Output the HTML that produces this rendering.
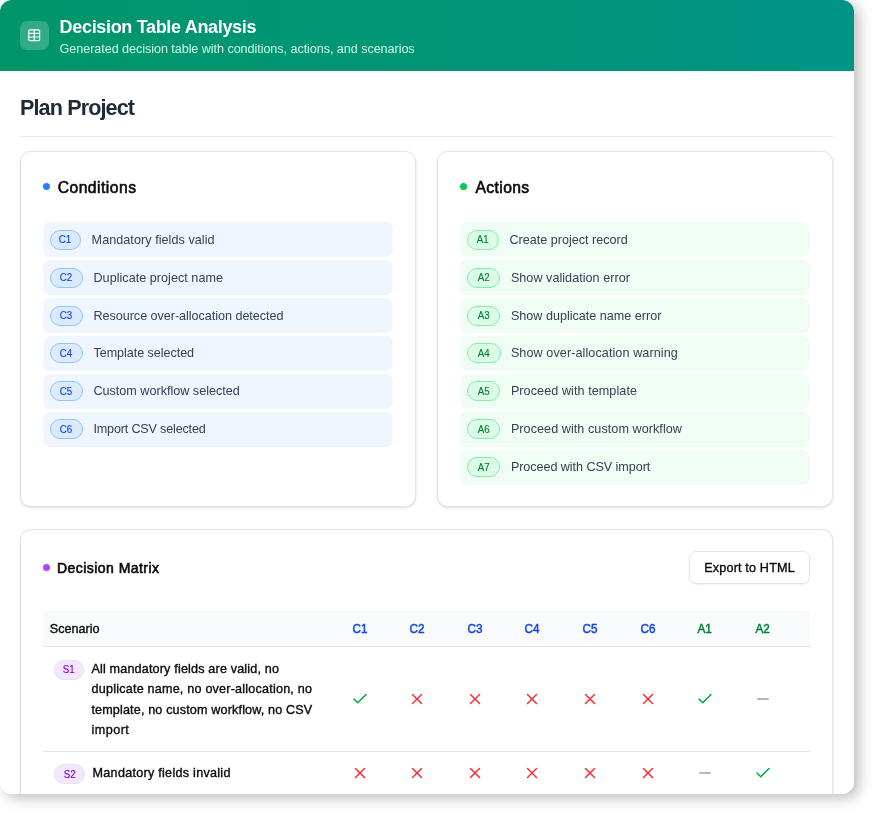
<!DOCTYPE html>
<html lang="en">
<head>
<meta charset="utf-8">
<title>Decision Table Analysis</title>
<style>
*{box-sizing:border-box;margin:0;padding:0}
html{font-size:14.4px}
body{width:877px;height:819px;overflow:hidden;background:#fff;font-family:"Liberation Sans",Arial,sans-serif;color:#0a0a0a}
.t{position:relative;top:.08em;white-space:nowrap}
.m{-webkit-text-stroke:.35px currentColor}
.sb{-webkit-text-stroke:.6px currentColor}
.dialog{will-change:transform;position:absolute;left:0;top:0;width:854px;height:794px;border-radius:12px;background:#fff;overflow:hidden;box-shadow:5px 4px 14px rgba(0,0,0,.26)}
.hdr{height:70.7px;background:linear-gradient(to right,#009669,#009485);background:linear-gradient(to right in oklab,#009669,#009485);display:flex;align-items:center;padding:0 0 0 20px;gap:.75rem;color:#fff}
.hdr .ico{width:2rem;height:2rem;border-radius:.5rem;background:rgba(255,255,255,.2);display:flex;align-items:center;justify-content:center;flex:none}
.hdr .ico svg{width:1rem;height:1rem}
.hdr h1{font-size:18px;line-height:1.75rem;font-weight:700}
.hdr p{font-size:12.6px;line-height:1.25rem;color:#d0fae5}
.body{padding:1.5rem 21px 0 20px}
h2{font-size:21.6px;line-height:2rem;font-weight:700;color:#1e2939;padding-bottom:15px;border-bottom:1px solid #e5e7eb}
.grid{display:grid;grid-template-columns:1fr 1fr;gap:1.5rem;margin-top:13.8px}
.card{background:#fff;border:1px solid #e5e5e5;border-radius:.75rem;padding:1.5rem 0;box-shadow:0 1px 3px 0 rgba(0,0,0,.1),0 1px 2px -1px rgba(0,0,0,.1)}
.card .ct{padding:0 1.5rem;display:flex;align-items:center;gap:.5rem;font-size:15.7px;line-height:1.75rem;font-weight:400;color:#0a0a0a}
.dot{width:7px;height:7px;border-radius:50%;flex:none;margin-right:.2px}
.list{padding:0 1.5rem;margin-top:23.66px;display:flex;flex-direction:column;gap:3.06px}
.item{display:flex;align-items:center;gap:.75rem;padding:.5rem;border-radius:.5rem;font-size:12.6px;line-height:20.475px;color:#364153}
.item.c{background:#eff6ff}
.item.a{background:#f0fdf4}
.badge{display:inline-flex;align-items:center;justify-content:center;border-radius:9999px;border:1px solid;padding:.125rem 0;font-size:10.8px;line-height:1rem;font-weight:400;white-space:nowrap;flex:none;position:relative;top:0}
.badge .t{top:-.15px;display:inline-block;transform:scaleX(.9);-webkit-text-stroke:.15px currentColor}
.badge.c{background:#dbeafe;border-color:#8ec5ff;color:#1447e6}
.badge.a{background:#dcfce7;border-color:#7bf1a8;color:#008236}
.badge.s{background:#f3e8ff;border-color:#e6e1ec;color:#8200db;margin-top:1.6px;margin-left:.8px;margin-right:-.8px}
.matrix{margin-top:1.5rem}
.mh{padding:0 1.5rem;display:flex;align-items:center;justify-content:space-between}
.mh .tt{display:flex;align-items:center;gap:.5rem;font-size:14px;line-height:1.5rem;font-weight:400}
.btn{height:2.25rem;width:120.5px;margin-right:.6px;justify-content:center;border:1px solid #e5e5e5;border-radius:.5rem;background:#fff;font-size:12.6px;font-weight:400;display:flex;align-items:center;box-shadow:0 1px 2px 0 rgba(0,0,0,.05);color:#0a0a0a}
.tw{margin:27.1px 1.5rem 0 1.5rem;overflow:hidden}
table{border-collapse:collapse;font-size:12.6px;table-layout:fixed;width:1400px}
th{height:2.5rem;padding:0;text-align:center;font-weight:400;background:#f9fafb;white-space:nowrap}
thead tr{border-bottom:1px solid #e5e5e5}
tbody tr{border-bottom:1px solid #e5e5e5}
th.s0{text-align:left;padding-left:.5rem}
th.c{color:#1447e6}
th.c .t,th.a .t{display:inline-block;transform:scaleX(.93);-webkit-text-stroke:.5px currentColor;top:.2px}
th.a{color:#008236}
td{padding:.75rem 0;vertical-align:middle}
td.sc{padding:.75rem}
.scw{display:flex;align-items:flex-start;gap:.5rem}
.scw .tx{font-size:12.6px;line-height:20.475px;font-weight:400;color:#0a0a0a;white-space:nowrap}
.scw .tx .t{display:inline-block;height:20.475px;vertical-align:top;top:.65px}
.item>.t{top:.29px}
th .t{top:.2px}
td svg{width:1.25rem;height:1.25rem;display:block;margin:0 auto}
</style>
</head>
<body>
<div class="dialog">
  <div class="hdr">
    <div class="ico"><svg viewBox="0 0 24 24" fill="none" stroke="#fff" stroke-width="2" stroke-linecap="round" stroke-linejoin="round"><path d="M12 3v18"/><rect width="18" height="18" x="3" y="3" rx="2"/><path d="M3 9h18"/><path d="M3 15h18"/></svg></div>
    <div>
      <h1><span class="t" id="h1" style="letter-spacing:-0.327px;left:0.00px">Decision Table Analysis</span></h1>
      <p><span class="t" id="sub" style="letter-spacing:-0.054px;left:0.00px">Generated decision table with conditions, actions, and scenarios</span></p>
    </div>
  </div>
  <div class="body">
    <h2><span class="t" id="h2" style="letter-spacing:-0.891px;left:0.00px">Plan Project</span></h2>
    <div class="grid">
      <div class="card">
        <div class="ct"><span class="dot" style="background:#2b7fff"></span><span class="t sb" id="ct1" style="letter-spacing:0.467px;left:0.70px">Conditions</span></div>
        <div class="list">
          <div class="item c"><span class="badge c" style="width:31.0px"><span class="t" id="bc1" style="letter-spacing:0.000px">C1</span></span><span class="t" id="ic1" style="letter-spacing:0.057px;left:0.00px">Mandatory fields valid</span></div><div class="item c"><span class="badge c" style="width:32.9px"><span class="t" id="bc2" style="letter-spacing:0.000px">C2</span></span><span class="t" id="ic2" style="letter-spacing:0.033px;left:0.00px">Duplicate project name</span></div><div class="item c"><span class="badge c" style="width:32.9px"><span class="t" id="bc3" style="letter-spacing:0.000px">C3</span></span><span class="t" id="ic3" style="letter-spacing:-0.034px;left:0.00px">Resource over-allocation detected</span></div><div class="item c"><span class="badge c" style="width:32.9px"><span class="t" id="bc4" style="letter-spacing:0.000px">C4</span></span><span class="t" id="ic4" style="letter-spacing:-0.056px;left:0.00px">Template selected</span></div><div class="item c"><span class="badge c" style="width:32.9px"><span class="t" id="bc5" style="letter-spacing:0.000px">C5</span></span><span class="t" id="ic5" style="letter-spacing:0.000px;left:0.00px">Custom workflow selected</span></div><div class="item c"><span class="badge c" style="width:32.9px"><span class="t" id="bc6" style="letter-spacing:0.000px">C6</span></span><span class="t" id="ic6" style="letter-spacing:-0.178px;left:0.00px">Import CSV selected</span></div>
        </div>
      </div>
      <div class="card">
        <div class="ct"><span class="dot" style="background:#00c950"></span><span class="t sb" id="ct2" style="letter-spacing:0.383px;left:1.20px">Actions</span></div>
        <div class="list">
          <div class="item a"><span class="badge a" style="width:31.6px"><span class="t" id="ba1" style="letter-spacing:0.000px">A1</span></span><span class="t" id="ia1" style="letter-spacing:0.000px;left:0.00px">Create project record</span></div><div class="item a"><span class="badge a" style="width:33.0px"><span class="t" id="ba2" style="letter-spacing:0.000px">A2</span></span><span class="t" id="ia2" style="letter-spacing:0.035px;left:0.00px">Show validation error</span></div><div class="item a"><span class="badge a" style="width:33.0px"><span class="t" id="ba3" style="letter-spacing:0.000px">A3</span></span><span class="t" id="ia3" style="letter-spacing:0.000px;left:0.00px">Show duplicate name error</span></div><div class="item a"><span class="badge a" style="width:34.0px"><span class="t" id="ba4" style="letter-spacing:0.000px">A4</span></span><span class="t" id="ia4" style="letter-spacing:0.089px;left:-1.00px">Show over-allocation warning</span></div><div class="item a"><span class="badge a" style="width:33.0px"><span class="t" id="ba5" style="letter-spacing:0.000px">A5</span></span><span class="t" id="ia5" style="letter-spacing:0.075px;left:0.00px">Proceed with template</span></div><div class="item a"><span class="badge a" style="width:33.0px"><span class="t" id="ba6" style="letter-spacing:0.000px">A6</span></span><span class="t" id="ia6" style="letter-spacing:0.063px;left:0.00px">Proceed with custom workflow</span></div><div class="item a"><span class="badge a" style="width:33.0px"><span class="t" id="ba7" style="letter-spacing:0.000px">A7</span></span><span class="t" id="ia7" style="letter-spacing:-0.059px;left:0.00px">Proceed with CSV import</span></div>
        </div>
      </div>
    </div>
    <div class="card matrix">
      <div class="mh">
        <div class="tt"><span class="dot" style="background:#ad46ff"></span><span class="t sb" id="mt" style="letter-spacing:0.457px;left:0.00px">Decision Matrix</span></div>
        <div class="btn"><span class="t m" id="btn" style="letter-spacing:0.169px">Export to HTML</span></div>
      </div>
      <div class="tw">
        <table>
          <colgroup><col style="width:289.1px"><col style="width:56.62px"><col style="width:57.38px"><col style="width:59.02px"><col style="width:54.78px"><col style="width:60.82px"><col style="width:54.58px"><col style="width:60.22px"><col style="width:55.78px"><col></colgroup>
          <thead><tr><th class="s0"><span class="t m" id="ths" style="letter-spacing:0.000px;left:0.00px">Scenario</span></th><th class="c"><span class="t m" id="thC1" style="letter-spacing:0.000px">C1</span></th><th class="c"><span class="t m" id="thC2" style="letter-spacing:0.000px">C2</span></th><th class="c"><span class="t m" id="thC3" style="letter-spacing:0.000px">C3</span></th><th class="c"><span class="t m" id="thC4" style="letter-spacing:0.000px">C4</span></th><th class="c"><span class="t m" id="thC5" style="letter-spacing:0.000px">C5</span></th><th class="c"><span class="t m" id="thC6" style="letter-spacing:0.000px">C6</span></th><th class="a"><span class="t m" id="thA1" style="letter-spacing:0.000px">A1</span></th><th class="a"><span class="t m" id="thA2" style="letter-spacing:0.000px">A2</span></th><th></th></tr></thead>
          <tbody>
            <tr>
              <td class="sc"><div class="scw"><span class="badge s" style="width:29.5px"><span class="t" id="bs1" style="letter-spacing:0.000px">S1</span></span><span class="tx m"><span class="t" id="l1" style="letter-spacing:0.170px;left:1.30px">All mandatory fields are valid, no</span><br><span class="t" id="l2" style="letter-spacing:0.205px;left:1.50px">duplicate name, no over-allocation, no</span><br><span class="t" id="l3" style="letter-spacing:0.151px;left:1.30px">template, no custom workflow, no CSV</span><br><span class="t" id="l4" style="letter-spacing:0.450px;left:1.50px">import</span></span></div></td>
              <td><svg viewBox="0 0 24 24" fill="none" stroke="#00a63e" stroke-width="2" stroke-linecap="round" stroke-linejoin="round"><path d="M20 6 9 17l-5-5"/></svg></td><td><svg viewBox="0 0 24 24" fill="none" stroke="#fb2c36" stroke-width="2" stroke-linecap="round" stroke-linejoin="round"><path d="M18 6 6 18"/><path d="m6 6 12 12"/></svg></td><td><svg viewBox="0 0 24 24" fill="none" stroke="#fb2c36" stroke-width="2" stroke-linecap="round" stroke-linejoin="round"><path d="M18 6 6 18"/><path d="m6 6 12 12"/></svg></td><td><svg viewBox="0 0 24 24" fill="none" stroke="#fb2c36" stroke-width="2" stroke-linecap="round" stroke-linejoin="round"><path d="M18 6 6 18"/><path d="m6 6 12 12"/></svg></td><td><svg viewBox="0 0 24 24" fill="none" stroke="#fb2c36" stroke-width="2" stroke-linecap="round" stroke-linejoin="round"><path d="M18 6 6 18"/><path d="m6 6 12 12"/></svg></td><td><svg viewBox="0 0 24 24" fill="none" stroke="#fb2c36" stroke-width="2" stroke-linecap="round" stroke-linejoin="round"><path d="M18 6 6 18"/><path d="m6 6 12 12"/></svg></td><td><svg viewBox="0 0 24 24" fill="none" stroke="#00a63e" stroke-width="2" stroke-linecap="round" stroke-linejoin="round"><path d="M20 6 9 17l-5-5"/></svg></td><td><svg viewBox="0 0 24 24" fill="none" stroke="#99a1af" stroke-width="2" stroke-linecap="round" stroke-linejoin="round"><path d="M5 12h14"/></svg></td>
              <td></td>
            </tr>
            <tr>
              <td class="sc"><div class="scw"><span class="badge s" style="width:30.5px"><span class="t" id="bs2" style="letter-spacing:0.000px">S2</span></span><span class="tx m"><span class="t" id="l5" style="letter-spacing:0.270px;left:1.50px">Mandatory fields invalid</span></span></div></td>
              <td><svg viewBox="0 0 24 24" fill="none" stroke="#fb2c36" stroke-width="2" stroke-linecap="round" stroke-linejoin="round"><path d="M18 6 6 18"/><path d="m6 6 12 12"/></svg></td><td><svg viewBox="0 0 24 24" fill="none" stroke="#fb2c36" stroke-width="2" stroke-linecap="round" stroke-linejoin="round"><path d="M18 6 6 18"/><path d="m6 6 12 12"/></svg></td><td><svg viewBox="0 0 24 24" fill="none" stroke="#fb2c36" stroke-width="2" stroke-linecap="round" stroke-linejoin="round"><path d="M18 6 6 18"/><path d="m6 6 12 12"/></svg></td><td><svg viewBox="0 0 24 24" fill="none" stroke="#fb2c36" stroke-width="2" stroke-linecap="round" stroke-linejoin="round"><path d="M18 6 6 18"/><path d="m6 6 12 12"/></svg></td><td><svg viewBox="0 0 24 24" fill="none" stroke="#fb2c36" stroke-width="2" stroke-linecap="round" stroke-linejoin="round"><path d="M18 6 6 18"/><path d="m6 6 12 12"/></svg></td><td><svg viewBox="0 0 24 24" fill="none" stroke="#fb2c36" stroke-width="2" stroke-linecap="round" stroke-linejoin="round"><path d="M18 6 6 18"/><path d="m6 6 12 12"/></svg></td><td><svg viewBox="0 0 24 24" fill="none" stroke="#99a1af" stroke-width="2" stroke-linecap="round" stroke-linejoin="round"><path d="M5 12h14"/></svg></td><td><svg viewBox="0 0 24 24" fill="none" stroke="#00a63e" stroke-width="2" stroke-linecap="round" stroke-linejoin="round"><path d="M20 6 9 17l-5-5"/></svg></td>
              <td></td>
            </tr>
          </tbody>
        </table>
      </div>
    </div>
  </div>
</div>
</body>
</html>
